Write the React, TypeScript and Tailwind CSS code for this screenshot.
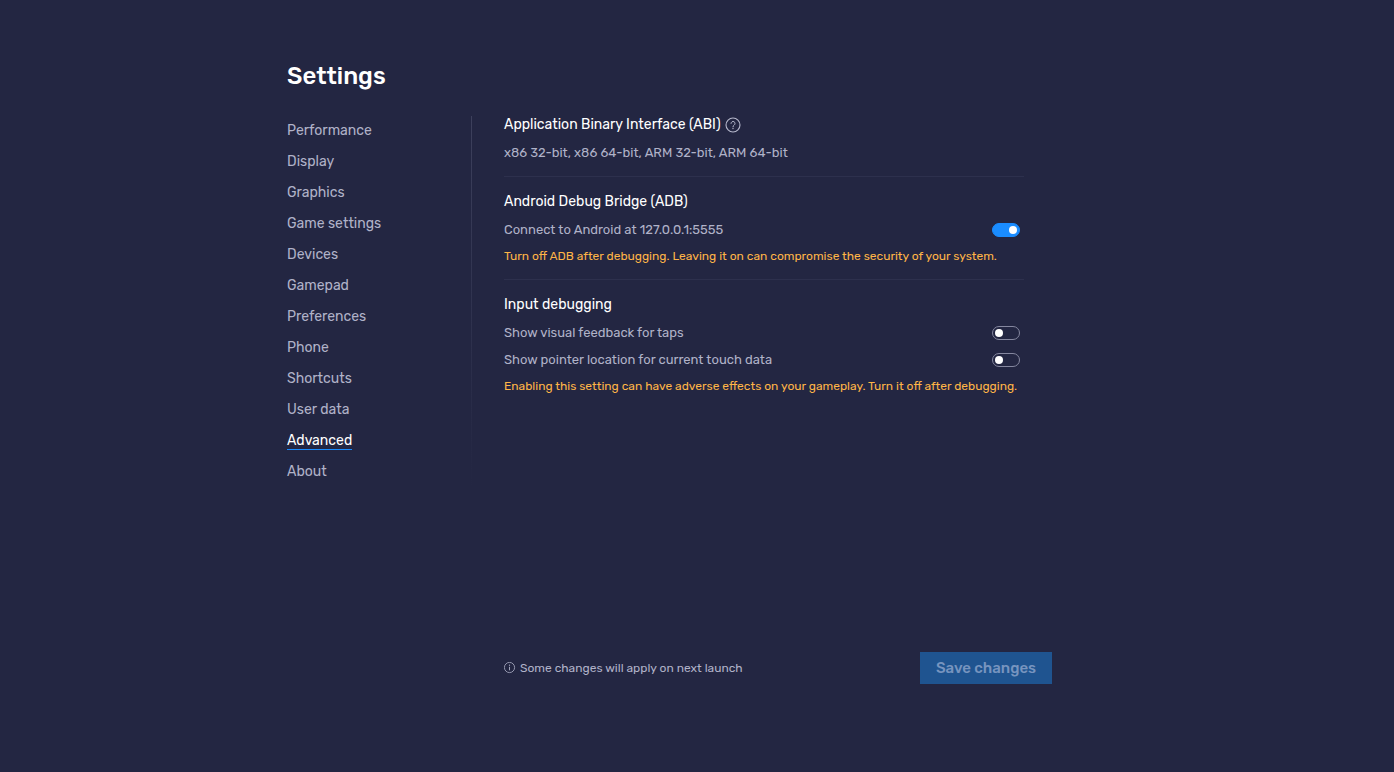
import { useState } from "react";
import type { ReactNode } from "react";

const tabs = [
  "Performance",
  "Display",
  "Graphics",
  "Game settings",
  "Devices",
  "Gamepad",
  "Preferences",
  "Phone",
  "Shortcuts",
  "User data",
  "Advanced",
  "About",
];

function HelpIcon() {
  return (
    <svg viewBox="0 0 16 16" className="size-4" fill="none" stroke="currentColor" aria-hidden="true">
      <circle cx="8" cy="8" r="7" strokeWidth="1.1" />
      <path d="M6 6.400a2 2 0 1 1 3.100 1.700C8.300 8.700 8 9 8 9.800" strokeWidth="1" strokeLinecap="round" />
      <circle cx="8" cy="11.500" r="0.65" fill="currentColor" stroke="none" />
    </svg>
  );
}

function InfoIcon() {
  return (
    <svg viewBox="0 0 12 12" className="size-3 shrink-0" fill="none" stroke="currentColor" aria-hidden="true">
      <circle cx="5.500" cy="5.500" r="5.100" strokeWidth="0.8" />
      <path d="M5.500 4.800v3.500" strokeWidth="0.9" />
      <circle cx="5.500" cy="3.200" r="0.6" fill="currentColor" stroke="none" />
    </svg>
  );
}

function Section({ title, help, children }: { title: string; help?: boolean; children: ReactNode }) {
  return (
    <section className="border-b border-[#2d304d] pt-[15px] pb-[13px] first:pt-0 last:border-b-0">
      <div className="mb-2 flex items-center gap-1">
        <h2 className="text-sm leading-5 text-white">{title}</h2>
        {help && (
          <button type="button" aria-label="Help" className="text-[#b6b8cc]">
            <HelpIcon />
          </button>
        )}
      </div>
      {children}
    </section>
  );
}

function ToggleRow({ label, initial = false }: { label: string; initial?: boolean }) {
  const [on, setOn] = useState(initial);
  return (
    <label className="flex items-center justify-between pr-1 text-[13px] leading-5">
      {label}
      <input
        type="checkbox"
        role="switch"
        checked={on}
        onChange={() => setOn(!on)}
        className="h-3.5 w-7 cursor-pointer appearance-none rounded-full border border-[#85879f] p-0.5 before:block before:size-2 before:rounded-full before:bg-white checked:border-[#1a8cff] checked:bg-[#1a8cff] checked:before:ml-3.5"
      />
    </label>
  );
}

function Warning({ children }: { children: ReactNode }) {
  return <p className="mt-1.5 text-xs leading-5 whitespace-nowrap text-[#ffb547]">{children}</p>;
}

export default function App() {
  const [active, setActive] = useState("Advanced");
  return (
    <div className="min-h-screen bg-[#232642] font-[Rubik,Roboto,sans-serif] text-[#b0b2c8]">
      <div className="mx-auto flex min-h-screen max-w-[820px] flex-col pt-[60px] pr-[55px] pb-[88px]">
        <h1 className="mb-6 text-2xl leading-8 font-medium text-white">Settings</h1>
        <div className="flex grow">
          <nav className="flex w-[184px] shrink-0 flex-col items-start gap-3 pt-[5px]">
            {tabs.map((tab) => (
              <a
                key={tab}
                href="#"
                onClick={() => setActive(tab)}
                aria-current={tab === active ? "page" : undefined}
                className={
                  tab === active
                    ? "h-[19px] border-b border-[#1a8cff] text-sm leading-5 text-white"
                    : "h-[19px] text-sm leading-5"
                }
              >
                {tab}
              </a>
            ))}
          </nav>
          <div className="h-[372px] w-px shrink-0 bg-linear-to-b from-[#3d405c] to-[#232642]" />
          <main className="flex grow flex-col justify-between pl-8">
            <div className="-mt-px w-[520px]">
              <Section title="Application Binary Interface (ABI)" help>
                <p className="text-[13px] leading-5">x86 32-bit, x86 64-bit, ARM 32-bit, ARM 64-bit</p>
              </Section>
              <Section title="Android Debug Bridge (ADB)">
                <ToggleRow label="Connect to Android at 127.0.0.1:5555" initial />
                <Warning>Turn off ADB after debugging. Leaving it on can compromise the security of your system.</Warning>
              </Section>
              <Section title="Input debugging">
                <div className="flex flex-col gap-[7px]">
                  <ToggleRow label="Show visual feedback for taps" />
                  <ToggleRow label="Show pointer location for current touch data" />
                </div>
                <Warning>Enabling this setting can have adverse effects on your gameplay. Turn it off after debugging.</Warning>
              </Section>
            </div>
            <footer className="flex items-center justify-between">
              <p className="flex items-center gap-1 text-xs">
                <InfoIcon />
                Some changes will apply on next launch
              </p>
              <button type="button" disabled className="h-8 w-[132px] bg-[#1f5490] text-[15px] font-medium text-[#7794bf]">
                Save changes
              </button>
            </footer>
          </main>
        </div>
      </div>
    </div>
  );
}
